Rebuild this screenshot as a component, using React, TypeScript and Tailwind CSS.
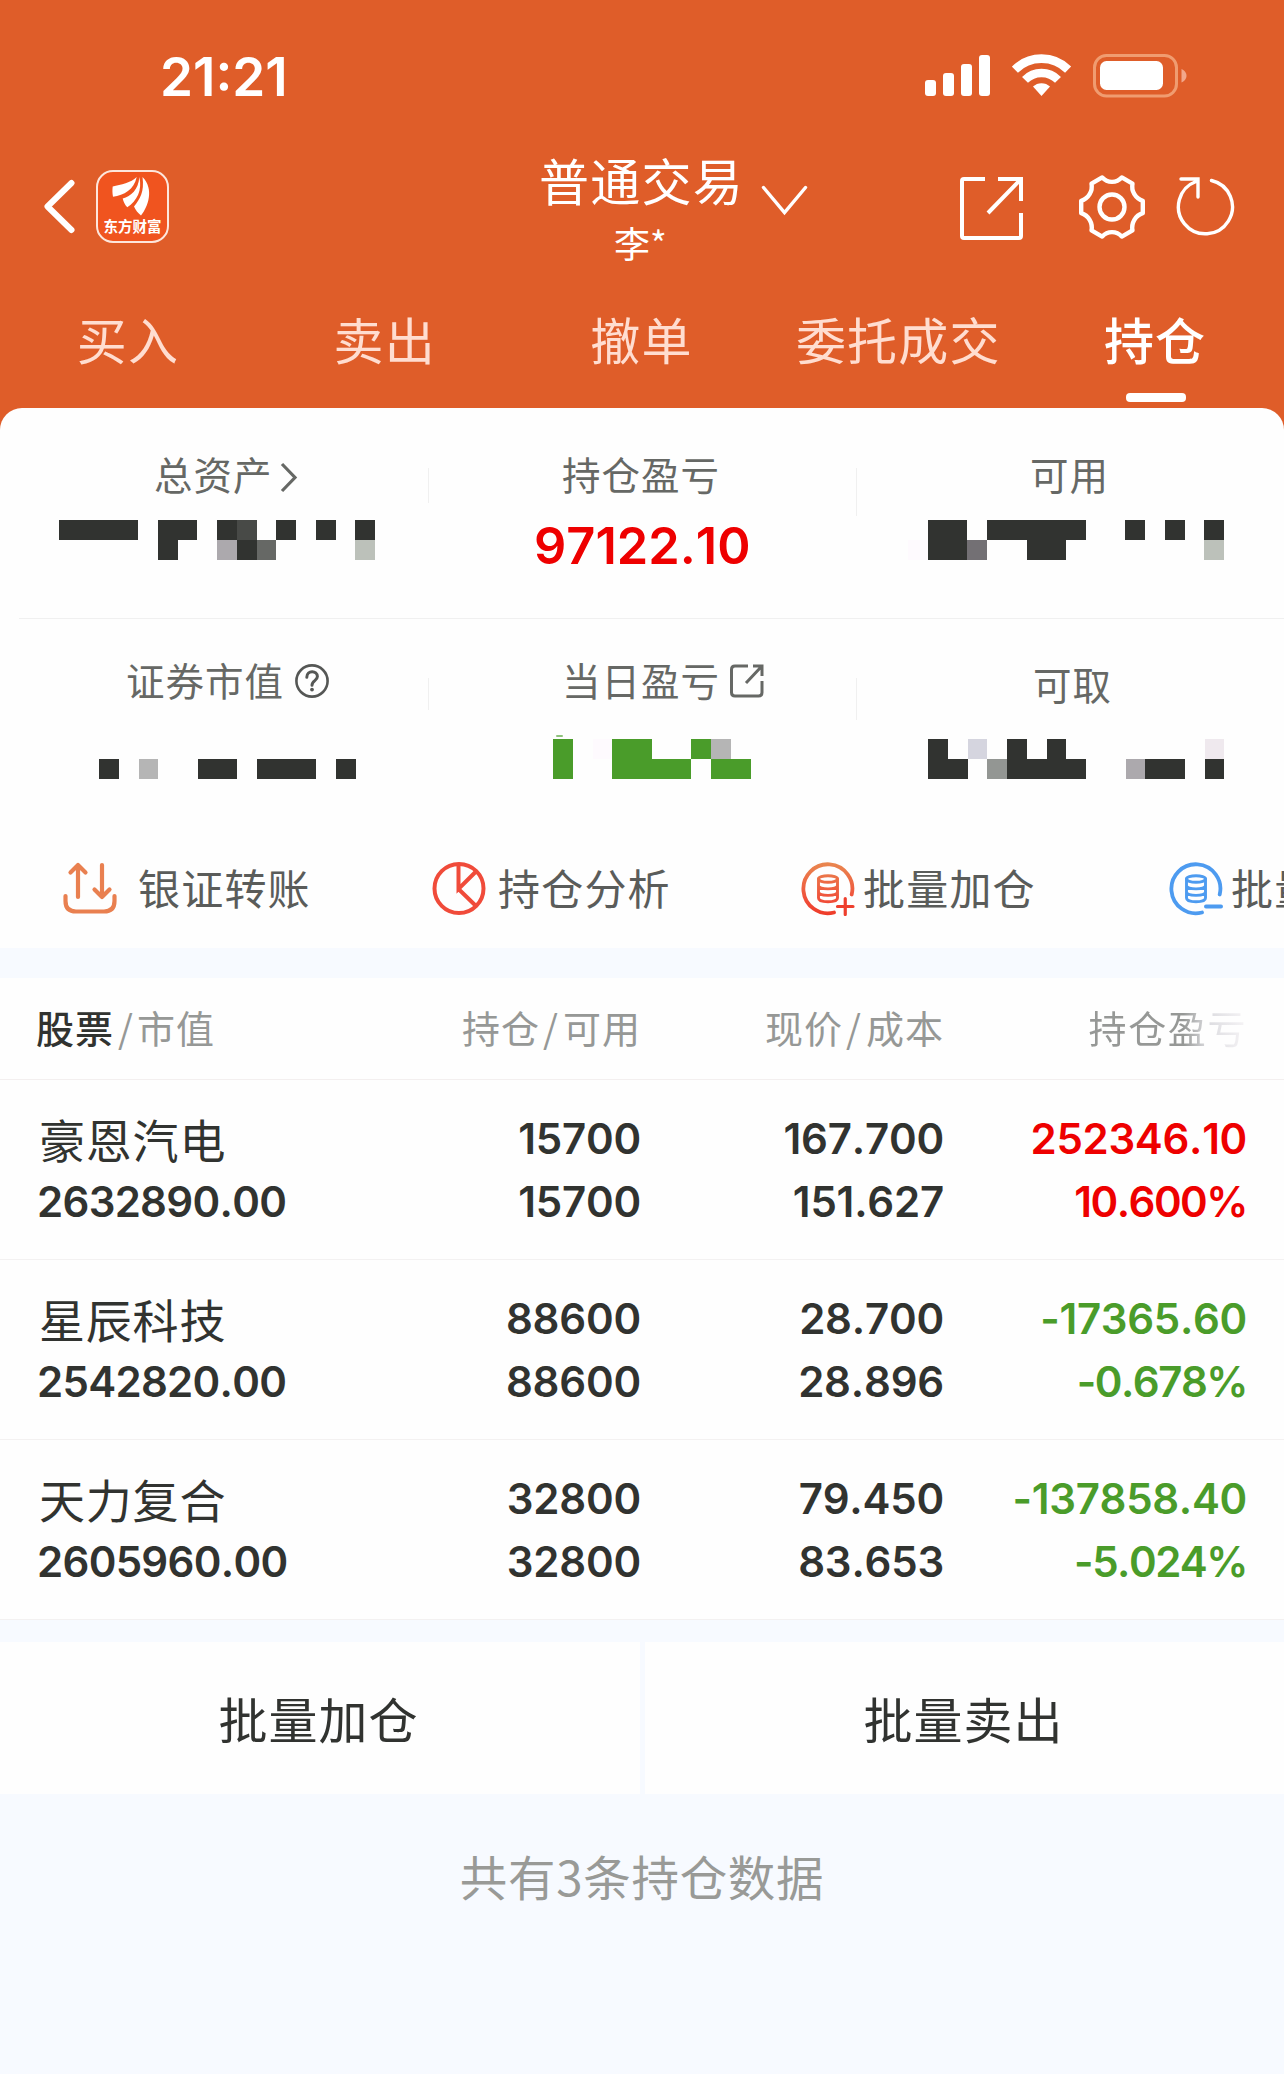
import React from "react";

const CJK = "font-['Noto_Sans_CJK_SC',sans-serif]";
const NUM = "font-['Inter',sans-serif] [font-kerning:none]";

const SHADES: Record<string, string> = {
  ".": "bg-transparent",
  D: "bg-[#313330]",
  d: "bg-[#484a47]",
  m: "bg-[#666865]",
  n: "bg-[#737074]",
  g: "bg-[#aca9ad]",
  s: "bg-[#bcc1ba]",
  b: "bg-[#b5b5b5]",
  h: "bg-[#939693]",
  l: "bg-[#d5d5df]",
  p: "bg-[#efe9ee]",
  w: "bg-[#fefafe]",
  G: "bg-[#4a9c2a]",
};

/** Privacy mosaic that hides an amount; one character per cell. */
function Mosaic({ rows, className }: { rows: string[]; className: string }) {
  return (
    <div className={className}>
      {rows.map((row, i) => (
        <div key={i} className="flex">
          {row.split("").map((c, j) => (
            <div key={j} className={`h-5 w-[19.77px] shrink-0 ${SHADES[c]}`} />
          ))}
        </div>
      ))}
    </div>
  );
}

function StatusBar() {
  return (
    <div className="flex h-[149px] items-start justify-between pt-[54px] pr-[96px] pl-[160px] text-white">
      <span className={`${NUM} -mt-[7px] text-[53px] leading-[60px] font-semibold`}>21:21</span>
      <div className="flex items-start">
        <svg width="66" height="44" viewBox="0 0 66 44" fill="currentColor">
          <rect x="0" y="26" width="11" height="16" rx="3" />
          <rect x="18" y="19" width="11" height="23" rx="3" />
          <rect x="36" y="10" width="11" height="32" rx="3" />
          <rect x="54" y="1" width="11" height="41" rx="3" />
        </svg>
        <svg className="ml-[21px]" width="60" height="44" viewBox="0 0 60 44" fill="none" stroke="currentColor">
          <path d="M2.9 15.6A37.7 37.7 0 0 1 56.1 15.6" strokeWidth="8.6" />
          <path d="M13 25.9A23.3 23.3 0 0 1 46 25.9" strokeWidth="8.4" />
          <path d="M29.5 42L21 32.5A12.5 12.5 0 0 1 38 32.5Z" fill="currentColor" stroke="none" />
        </svg>
        <svg className="ml-[21px]" width="95" height="44" viewBox="0 0 95 44">
          <rect x="1.5" y="1.5" width="82" height="40.5" rx="12" fill="none" stroke="#f09c70" strokeWidth="3" />
          <rect x="7" y="7" width="63" height="29" rx="6.5" fill="#fff" />
          <path d="M88.5 15V28.5C91 27.5 93.5 25 93.5 21.7S91 16 88.5 15Z" fill="#f2a78b" />
        </svg>
      </div>
    </div>
  );
}

function NavBar() {
  return (
    <div className="grid h-[158px] grid-cols-[427px_428px_429px] text-white">
      <div className="flex items-start pl-[43px]">
        <svg className="mt-[30px]" width="33" height="55" viewBox="0 0 33 55" fill="none" stroke="currentColor" strokeWidth="6" strokeLinecap="round" strokeLinejoin="round">
          <path d="M28.5 4L4.5 27.5L28.5 51" />
        </svg>
        <div className="mt-[21px] ml-[20px] flex h-[73px] w-[73px] flex-col items-center rounded-[17px] border-2 border-[#fde6dc] bg-[#f0541f]">
          <svg className="mt-[3px] shrink-0" width="69" height="42" viewBox="2 5 69 42" fill="currentColor">
            <path d="M40.700 7C35 13 25 14.500 16.700 16.500C16.300 20 16.300 23 17 26.700C28 25 38 20 40.700 7Z" />
            <path d="M43.300 7C42.500 20 35 26 26.700 28.500C27.500 32 29 35 31.300 37.300C41 31 46.500 20 43.300 7Z" />
            <path d="M46.500 7C48.500 22 44 29 38 36.500C39.500 40 42 43 45 45.500C52 37 58.500 19 46.500 7Z" />
          </svg>
          <span className={`${CJK} text-[14.5px] leading-[18px] font-bold whitespace-nowrap`}>东方财富</span>
        </div>
      </div>
      <div className="flex items-start justify-center">
        <div className={`${CJK} flex w-[214px] flex-col items-center`}>
          <span className="text-[50px] leading-[60px] tracking-[1.2px] whitespace-nowrap">普通交易</span>
          <span className="mt-[11px] pr-[2px] text-[36px] leading-[44px]">李*</span>
        </div>
        <svg className="mt-[35px] -mr-[60px] ml-[12px] shrink-0" width="47" height="32" viewBox="0 0 47 32" fill="none" stroke="currentColor" strokeWidth="3.4" strokeLinecap="round">
          <path d="M2.5 3.5L23.5 28.5L44.5 3.5" />
        </svg>
      </div>
      <div className="flex items-start pl-[105px]">
        <svg className="mt-[28px]" width="63" height="63" viewBox="0 0 63 63" fill="none" stroke="currentColor" strokeWidth="4">
          <path d="M25 2H4Q2 2 2 4V59Q2 61 4 61H59Q61 61 61 59V36M38 2H61V24M60 3L28 36" />
        </svg>
        <svg className="mt-[25px] ml-[55px]" width="68" height="66" viewBox="-34 -33 68 66" fill="none" stroke="currentColor" strokeWidth="4.4" strokeLinejoin="round">
          <path d="M30.8-6.2V6.2A15 15 0 0 0 20.5 23.4L9.8 29.6A13 13 0 0 0-9.8 29.6L-20.5 23.4A15 15 0 0 0-30.8 6.2V-6.2A15 15 0 0 0-20.5-23.4L-9.8-29.6A13 13 0 0 0 9.8-29.6L20.5-23.4A15 15 0 0 0 30.8-6.2Z" />
          <circle r="12.5" />
        </svg>
        <svg className="mt-[27px] ml-[30px]" width="60" height="62" viewBox="0 0 60 62" fill="none" stroke="currentColor" strokeWidth="3.4" strokeLinecap="round">
          <path d="M35.5 4.500A27 27 0 1 1 20 5.500M5 3H22V21" />
        </svg>
      </div>
    </div>
  );
}

const TABS = ["买入", "卖出", "撤单", "委托成交", "持仓"];

function Tabs() {
  return (
    <div className="grid h-[101px] grid-cols-5">
      {TABS.map((t) => (
        <div key={t} className="flex flex-col items-center">
          <span
            className={`${CJK} mt-[1px] -ml-px text-[50px] leading-[60px] tracking-[1.2px] whitespace-nowrap ${
              t === "持仓" ? "font-medium text-white" : "font-normal text-[#ffddd0]"
            }`}
          >
            {t}
          </span>
          {t === "持仓" && <div className="mt-[25px] h-[9px] w-[60px] rounded-[4px] bg-white" />}
        </div>
      ))}
    </div>
  );
}

const LABEL = `${CJK} text-[38.5px] leading-[44px] tracking-[1px] text-[#666865] whitespace-nowrap`;

function Summary() {
  return (
    <>
      <div className="grid h-[210px] grid-cols-[429px_428px_427px]">
        <div className="flex">
          <div className="w-[428px] pt-[43px]">
            <div className="flex pl-[154px]">
              <span className={LABEL}>总资产</span>
              <svg className="mt-[10px] ml-[6px]" width="20" height="33" viewBox="0 0 20 33" fill="none" stroke="#666865" strokeWidth="3.2">
                <path d="M3 3L16 16.5L3 30" />
              </svg>
            </div>
            <Mosaic className="mt-[25px] ml-[59px]" rows={["DDDD.DD.Dd.D.D.D", ".....D..gDm....s"]} />
          </div>
          <div className="mt-[60px] h-[35px] w-px bg-[#f0f0f0]" />
        </div>
        <div className="flex">
          <div className="flex w-[427px] flex-col pt-[43px]">
            <span className={`${LABEL} pl-[133px]`}>持仓盈亏</span>
            <span className={`${NUM} mt-[21px] pl-[105px] text-[50.5px] leading-[60px] font-semibold text-[#ee0000]`}>97122.10</span>
          </div>
          <div className="mt-[60px] h-[48px] w-px bg-[#f0f0f0]" />
        </div>
        <div className="pt-[43px]">
          <div className={`${LABEL} pl-[173px]`}>可用</div>
          <Mosaic className="mt-[25px] ml-[51px]" rows={[".DD.DDDDD..D.D.D", "wDDn..DD.......s"]} />
        </div>
      </div>
      <div className="ml-[19px] h-px bg-[#f0f0f0]" />
      <div className="grid h-[210px] grid-cols-[429px_428px_427px]">
        <div className="flex">
          <div className="w-[428px] pt-[38px]">
            <div className="flex pl-[126px]">
              <span className={LABEL}>证券市值</span>
              <svg className="mt-[6px] ml-[10px]" width="36" height="36" viewBox="0 0 36 36" fill="none" stroke="#555755" strokeWidth="2.6" strokeLinecap="round">
                <circle cx="18" cy="18" r="15.6" />
                <path d="M12.8 14.2C12.8 7 23.4 7 23.4 13.6C23.4 17.8 18 17.4 18 22.2" strokeWidth="3" />
                <circle cx="18" cy="26.6" r="1.9" fill="#555755" stroke="none" />
              </svg>
            </div>
            <Mosaic className="mt-[58px] ml-[99px]" rows={["D.b..DD.DDD.D"]} />
          </div>
          <div className="mt-[59px] h-[32px] w-px bg-[#f0f0f0]" />
        </div>
        <div className="flex">
          <div className="w-[427px] pt-[38px]">
            <div className="flex pl-[133px]">
              <span className={LABEL}>当日盈亏</span>
              <svg className="mt-[7px] ml-[9px]" width="36" height="35" viewBox="0 0 36 35" fill="none" stroke="#666865" strokeWidth="3">
                <path d="M19 2H6Q2.5 2 2.5 5.5V28.5Q2.5 32 6 32H29.5Q33 32 33 28.5V17M24 2H33V12M32.5 2.5L17 19" />
              </svg>
            </div>
            <div className="mt-[34px] ml-[127px] h-[2px] w-[7px] rounded-full bg-[#8fc27c]" />
            <Mosaic className="mt-[2px] ml-[124px]" rows={["G.wGG..Gb.", "G..GGGG.GG"]} />
          </div>
          <div className="mt-[59px] h-[42px] w-px bg-[#f0f0f0]" />
        </div>
        <div className="pt-[42px]">
          <div className={`${LABEL} pl-[176px]`}>可取</div>
          <Mosaic className="mt-[34px] ml-[71px]" rows={["D.l.D.D.......p", "DD.hDDDD..gDD.D"]} />
        </div>
      </div>
    </>
  );
}

function TransferIcon() {
  return (
    <svg className="shrink-0" width="54" height="54" viewBox="0 0 54 54" fill="none" stroke="#e98050" strokeWidth="4.2" strokeLinecap="round" strokeLinejoin="round">
      <path d="M15 35V3M7.5 10.5L15 3L22.5 10.5M39 3V35M31.5 27.5L39 35L46.5 27.5" />
      <path d="M2.5 34V39Q2.5 49.5 13 49.5H41Q51.5 49.5 51.5 39V34" />
    </svg>
  );
}

function PieIcon() {
  return (
    <svg className="shrink-0" width="54" height="54" viewBox="0 0 54 54" fill="none" stroke="#f04b3a" strokeWidth="4">
      <circle cx="27" cy="26.5" r="24.500" />
      <path d="M26.5 2V27L44 9.5M26.5 27L44.5 44.5" />
    </svg>
  );
}

function StackIcon({ kind }: { kind: "plus" | "minus" }) {
  const color = kind === "plus" ? "url(#warm)" : "#4d9bf0";
  return (
    <svg className="shrink-0" width="54" height="54" viewBox="0 0 54 54" fill="none" stroke={color} strokeWidth="3.8" strokeLinecap="round">
      <defs>
        <linearGradient id="warm" gradientUnits="userSpaceOnUse" x1="27" y1="0" x2="27" y2="54">
          <stop offset="0" stopColor="#e98850" />
          <stop offset="0.7" stopColor="#f04f3a" />
          <stop offset="1" stopColor="#ee3a28" />
        </linearGradient>
      </defs>
      <path d="M50.7 32.5A24.5 24.5 0 1 0 33 50.5" />
      <g strokeWidth="2.9">
        <ellipse cx="27" cy="17" rx="9.5" ry="3.2" />
        <path d="M17.5 17V36C17.5 41 36.5 41 36.5 36V17M17.5 23.5C17.5 28 36.5 28 36.5 23.5M17.5 30C17.5 34.5 36.5 34.5 36.5 30" />
      </g>
      {kind === "plus" ? (
        <path d="M36.5 44.5H52M44.25 36.500V52.500" stroke="#ee3f2d" strokeWidth="3.2" />
      ) : (
        <path d="M37 44.5H52" strokeWidth="4" />
      )}
    </svg>
  );
}

const ACTION_TEXT = `${CJK} -mt-[4px] text-[42px] leading-[50px] tracking-[1.2px] text-[#5a5c5a] whitespace-nowrap`;

function Actions() {
  return (
    <div className="flex h-[119px] items-center overflow-hidden">
      <div className="flex w-[369px] shrink-0 items-center pl-[63px]">
        <TransferIcon />
        <span className={`${ACTION_TEXT} ml-[21px]`}>银证转账</span>
      </div>
      <div className="flex w-[369px] shrink-0 items-center pl-[63px]">
        <PieIcon />
        <span className={`${ACTION_TEXT} ml-[12px]`}>持仓分析</span>
      </div>
      <div className="flex w-[369px] shrink-0 items-center pl-[63px]">
        <StackIcon kind="plus" />
        <span className={`${ACTION_TEXT} ml-[8px]`}>批量加仓</span>
      </div>
      <div className="flex w-[177px] shrink-0 items-center pl-[62px]">
        <StackIcon kind="minus" />
        <span className={`${ACTION_TEXT} ml-[8px]`}>批量</span>
      </div>
    </div>
  );
}

const HOLDINGS = [
  { name: "豪恩汽电", value: "2632890.00", qty: "15700", avail: "15700", price: "167.700", cost: "151.627", pnl: "252346.10", pct: "10.600%", tone: "text-[#ee0000]" },
  { name: "星辰科技", value: "2542820.00", qty: "88600", avail: "88600", price: "28.700", cost: "28.896", pnl: "-17365.60", pct: "-0.678%", tone: "text-[#4a9c2a]" },
  { name: "天力复合", value: "2605960.00", qty: "32800", avail: "32800", price: "79.450", cost: "83.653", pnl: "-137858.40", pct: "-5.024%", tone: "text-[#4a9c2a]" },
];

const COLS = "grid grid-cols-[302px_302px_303px_303px] pl-[37px]";

function HeadPair({ a, b }: { a: string; b: string }) {
  return (
    <span className="text-right">
      {a}
      <span className="mr-[4px] ml-[3px]">/</span>
      {b}
    </span>
  );
}

function Holdings() {
  return (
    <div className="bg-[#fefefe]">
      <div className={`${COLS} ${CJK} h-[102px] border-b border-[#f3efef] pt-[27px] text-[38px] leading-[44px] tracking-[1px] whitespace-nowrap text-[#969896]`}>
        <span className="-ml-[1px]">
          <span className="font-medium text-[#313330]">股票</span>
          <span className="mr-[3px] ml-[4px]">/</span>市值
        </span>
        <HeadPair a="持仓" b="可用" />
        <HeadPair a="现价" b="成本" />
        <span className="bg-[linear-gradient(to_right,#969896_79%,#dcdce0_87%,#f6f4f6_100%)] bg-clip-text text-right tracking-[1.6px] text-transparent">
          持仓盈亏
        </span>
      </div>
      {HOLDINGS.map((h) => (
        <div key={h.name} className={`${COLS} ${NUM} h-[180px] border-b border-[#f3f1f1] pt-[27px] text-[42px] leading-[63px] font-semibold tracking-[-0.2px] text-[#313330]`}>
          <div className="flex flex-col">
            <span className={`${CJK} ml-[2px] text-[46px] leading-[63px] font-normal tracking-[0.8px]`}>{h.name}</span>
            <span className="tracking-[-0.7px]">{h.value}</span>
          </div>
          <div className="flex flex-col text-right">
            <span>{h.qty}</span>
            <span>{h.avail}</span>
          </div>
          <div className="flex flex-col text-right">
            <span>{h.price}</span>
            <span>{h.cost}</span>
          </div>
          <div className={`flex flex-col text-right tracking-[-0.3px] ${h.tone}`}>
            <span>{h.pnl}</span>
            <span className="tracking-[-1.5px]">{h.pct}</span>
          </div>
        </div>
      ))}
    </div>
  );
}

export default function App() {
  return (
    <div className="min-h-[2074px] w-[1284px] overflow-hidden bg-[#f7faff]">
      <div className="bg-[#df5d29]">
        <StatusBar />
        <NavBar />
        <Tabs />
        <div className="rounded-t-[22px] bg-[#fefefe]">
          <Summary />
          <Actions />
        </div>
      </div>
      <div className="h-[30px]" />
      <Holdings />
      <div className={`${CJK} mt-[22px] grid h-[152px] grid-cols-[640px_639px] gap-[5px] text-[49px] leading-[60px] tracking-[1px] text-[#313330]`}>
        <div className="flex items-center justify-center bg-[#fefefe] pr-[3px]">批量加仓</div>
        <div className="flex items-center justify-center bg-[#fefefe] pr-[2px]">批量卖出</div>
      </div>
      <div className={`${CJK} mt-[52px] text-center text-[47.5px] leading-[60px] font-normal tracking-[0.7px] text-[#999a97]`}>
        共有3条持仓数据
      </div>
    </div>
  );
}
